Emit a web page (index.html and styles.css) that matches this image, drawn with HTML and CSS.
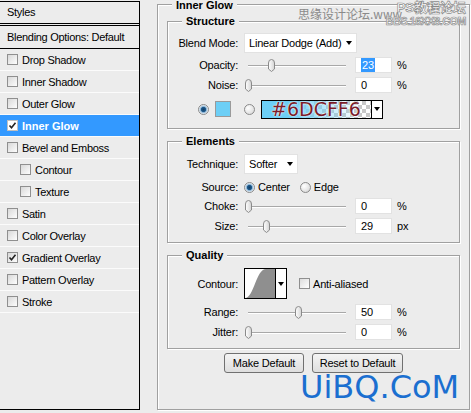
FILE: index.html
```html
<!DOCTYPE html>
<html lang="en">

<head>
  <meta charset="UTF-8">
  <meta name="viewport" content="width=device-width, initial-scale=1.0">
  <title>Layer Style - Inner Glow</title>
  <link rel="stylesheet" href="styles.css">
</head>

<body>
  <svg class="defs" width="0" height="0">
    <defs>
      <linearGradient id="thumb-fill" x1="0" y1="0" x2="1" y2="0">
        <stop offset="0" stop-color="#ffffff" />
        <stop offset="1" stop-color="#d4d4d4" />
      </linearGradient>
      <symbol id="thumb" viewBox="0 0 9 13">
        <path d="M1.5 4 Q1.5 0.5 4.5 0.5 Q7.5 0.5 7.5 4 V10 L4.5 12.5 L1.5 10 Z" fill="url(#thumb-fill)" stroke="#8a8a8a" />
      </symbol>
      <symbol id="tick" viewBox="0 0 9 9">
        <path d="M1.5 4.5 L3.5 6.8 L7.5 1.8" fill="none" stroke="#222" stroke-width="1.6" />
      </symbol>
    </defs>
  </svg>

  <div class="dialog">
    <ul class="styles-list">
      <li class="styles-head">Styles</li>
      <li class="blend-head">Blending Options: Default</li>
      <li class="style-row"><span class="check"></span>Drop Shadow</li>
      <li class="style-row"><span class="check"></span>Inner Shadow</li>
      <li class="style-row"><span class="check"></span>Outer Glow</li>
      <li class="style-row is-active"><span class="check"><svg><use href="#tick" /></svg></span>Inner Glow</li>
      <li class="style-row"><span class="check"></span>Bevel and Emboss</li>
      <li class="style-row sub"><span class="check"></span>Contour</li>
      <li class="style-row sub"><span class="check"></span>Texture</li>
      <li class="style-row"><span class="check"></span>Satin</li>
      <li class="style-row"><span class="check"></span>Color Overlay</li>
      <li class="style-row"><span class="check"><svg><use href="#tick" /></svg></span>Gradient Overlay</li>
      <li class="style-row"><span class="check"></span>Pattern Overlay</li>
      <li class="style-row"><span class="check"></span>Stroke</li>
    </ul>

    <div class="group outer">
      <span class="group-title">Inner Glow</span>

      <div class="group structure">
        <span class="group-title">Structure</span>
        <div class="row row-select">
          <span class="lbl">Blend Mode:</span>
          <div class="select select-blend">Linear Dodge (Add)<span class="arrow"></span></div>
        </div>
        <div class="row">
          <span class="lbl">Opacity:</span>
          <div class="slider"><svg class="thumb" style="left: 23px"><use href="#thumb" /></svg></div>
          <div class="num"><span class="picked">23</span></div>
          <span class="unit">%</span>
        </div>
        <div class="row">
          <span class="lbl">Noise:</span>
          <div class="slider"><svg class="thumb" style="left: 0px"><use href="#thumb" /></svg></div>
          <div class="num">0</div>
          <span class="unit">%</span>
        </div>
        <div class="row row-color">
          <span class="radio on"></span>
          <span class="swatch"></span>
          <span class="radio"></span>
          <div class="grad">
            <div class="grad-fill"><span class="grad-hex">#6DCFF6</span></div>
            <div class="grad-arrow"><span class="arrow"></span></div>
          </div>
        </div>
      </div>

      <div class="group elements">
        <span class="group-title">Elements</span>
        <div class="row row-select">
          <span class="lbl">Technique:</span>
          <div class="select select-tech">Softer<span class="arrow"></span></div>
        </div>
        <div class="row row-source">
          <span class="lbl">Source:</span>
          <span class="radio on"></span>
          <span class="opt">Center</span>
          <span class="radio"></span>
          <span class="opt">Edge</span>
        </div>
        <div class="row row-choke">
          <span class="lbl">Choke:</span>
          <div class="slider"><svg class="thumb" style="left: 0px"><use href="#thumb" /></svg></div>
          <div class="num">0</div>
          <span class="unit">%</span>
        </div>
        <div class="row">
          <span class="lbl">Size:</span>
          <div class="slider"><svg class="thumb" style="left: 18px"><use href="#thumb" /></svg></div>
          <div class="num">29</div>
          <span class="unit">px</span>
        </div>
      </div>

      <div class="group quality">
        <span class="group-title">Quality</span>
        <div class="row row-contour">
          <span class="lbl">Contour:</span>
          <div class="contour">
            <svg class="curve" width="30" height="29" viewBox="0 0 30 29">
              <path d="M0 29 C9 29 11 0 21 0 L30 0 L30 29 Z" fill="#8f8f8f" />
            </svg>
            <div class="contour-arrow"><span class="arrow"></span></div>
          </div>
          <span class="check"></span>
          <span class="opt">Anti-aliased</span>
        </div>
        <div class="row row-range">
          <span class="lbl">Range:</span>
          <div class="slider"><svg class="thumb" style="left: 50px"><use href="#thumb" /></svg></div>
          <div class="num">50</div>
          <span class="unit">%</span>
        </div>
        <div class="row">
          <span class="lbl">Jitter:</span>
          <div class="slider"><svg class="thumb" style="left: 0px"><use href="#thumb" /></svg></div>
          <div class="num">0</div>
          <span class="unit">%</span>
        </div>
      </div>

      <div class="buttons">
        <button class="btn btn-make">Make Default</button>
        <button class="btn btn-reset">Reset to Default</button>
      </div>
    </div>

    <!-- watermarks sitting over the screenshot -->
    <span class="mark-top">思缘设计论坛.www.</span>
    <span class="mark-ps"><span class="mark-ps-cn">PS教程论坛</span><span class="mark-ps-en">BBS.16XX8.COM</span></span>
    <span class="mark-uibq">UiBQ.CoM</span>
  </div>
</body>

</html>
```

FILE: styles.css
```css
html {
  box-sizing: border-box;
  font-family: "Liberation Sans", Arial, sans-serif;
  font-size: 11px;
}

*,
*:before,
*:after {
  box-sizing: inherit;
}

body {
  margin: 0;
  width: 471px;
  height: 413px;
  overflow: hidden;
  background: #ececec;
  color: #000;
}

.defs {
  position: absolute;
}

.dialog {
  position: relative;
  display: flex;
  align-items: flex-start;
  height: 413px;
}

/* left list of styles */
.styles-list {
  list-style: none;
  margin: 1px 0 0 -1px;
  padding: 0;
  width: 141px;
  height: 409px;
  border: 1px solid #000;
  background: #ececec;
  letter-spacing: -0.3px;
}

.styles-head {
  height: 24px;
  line-height: 21px;
  padding-left: 7px;
  border-bottom: 3px double #000;
}

.blend-head {
  height: 23px;
  line-height: 22px;
  padding-left: 7px;
  border-bottom: 1px solid #000;
}

.style-row {
  display: flex;
  align-items: center;
  gap: 4px;
  height: 22px;
  padding-left: 7px;
  border-bottom: 1px solid #fbfbfb;
}

.style-row.sub {
  padding-left: 20px;
}

.style-row.is-active {
  background: #3399ff;
  color: #fff;
  font-weight: bold;
  letter-spacing: 0;
}

.check {
  display: inline-flex;
  align-items: center;
  justify-content: center;
  width: 11px;
  height: 11px;
  flex-shrink: 0;
  border: 1px solid #8f8f8f;
  background: linear-gradient(135deg, #d8d8d8, #fdfdfd);
}

.check svg {
  width: 9px;
  height: 9px;
}

.is-active .check {
  background: #fff;
  border-color: #c0c0c0;
}

/* group boxes */
.group {
  position: relative;
  border: 1px solid #a0a0a0;
  box-shadow: inset 1px 1px 0 #fff, 1px 1px 0 #fff;
}

.group-title {
  position: absolute;
  top: -7px;
  left: 14px;
  padding: 0 4px;
  line-height: 13px;
  background: #ececec;
  font-weight: bold;
  letter-spacing: 0;
}

.outer {
  margin: 4px 0 0 17px;
  width: 313px;
  height: 406px;
  padding: 16px 9px 0;
  letter-spacing: -0.2px;
}

.outer > .group-title {
  top: -6px;
}

.structure {
  padding-bottom: 10px;
}

.elements {
  margin-top: 12px;
  padding-bottom: 8px;
}

.quality {
  margin-top: 12px;
  padding-bottom: 8px;
}

/* rows */
.row {
  display: flex;
  align-items: center;
  height: 16px;
  margin-top: 4px;
}

.row-select {
  height: 20px;
  margin-top: 11px;
}

.elements .row-select {
  margin-top: 12px;
}

.row-color {
  height: 18px;
  margin-top: 7px;
  padding-left: 30px;
}

.row-source {
  margin-top: 5px;
}

.row-choke {
  margin-top: 3px;
}

.row-contour {
  height: 31px;
  margin-top: 12px;
}

.row-range {
  margin-top: 5px;
}

.lbl {
  width: 70px;
  flex-shrink: 0;
  margin-right: 6px;
  text-align: right;
}

.select {
  display: flex;
  align-items: center;
  justify-content: space-between;
  height: 20px;
  padding: 0 4px;
  background: #fff;
  border: 1px solid #e2e2e2;
}

.select-blend {
  width: 113px;
}

.select-tech {
  width: 54px;
}

.arrow {
  width: 0;
  height: 0;
  border-left: 3.5px solid transparent;
  border-right: 3.5px solid transparent;
  border-top: 4px solid #000;
}

.slider {
  position: relative;
  width: 106px;
  height: 16px;
  margin-right: 5px;
}

.slider:before {
  content: "";
  position: absolute;
  left: 4px;
  right: 4px;
  top: 8px;
  height: 2px;
  border-top: 1px solid #a8a8a8;
  border-bottom: 1px solid #fff;
}

.thumb {
  position: absolute;
  top: 2px;
  width: 9px;
  height: 13px;
}

.num {
  width: 37px;
  height: 16px;
  padding-left: 5px;
  line-height: 14px;
  background: #fff;
  border: 1px solid #e2e2e2;
}

.picked {
  display: inline-block;
  padding: 0 1px;
  background: #3399ff;
  color: #fff;
}

.unit {
  margin-left: 5px;
}

.radio {
  width: 11px;
  height: 11px;
  flex-shrink: 0;
  border-radius: 50%;
  border: 1px solid #8a8a8a;
  background: radial-gradient(circle at 35% 35%, #fff, #d2d2d2);
}

.radio.on {
  background: radial-gradient(circle, #143e66 0, #1e5a8c 2.2px, #8fb6d6 3px, #eef3f7 4.5px);
}

.swatch {
  width: 16px;
  height: 16px;
  margin: 0 13px 0 6px;
  background: #6dcff6;
  border: 1px solid #9a9a9a;
}

.grad {
  display: flex;
  width: 122px;
  height: 19px;
  margin-left: 6px;
  border: 1px solid #000;
}

.grad-fill {
  position: relative;
  flex: 1;
  background: linear-gradient(to right, #6dcff6 25%, rgba(109, 207, 246, 0) 90%),
    repeating-conic-gradient(#c8c8c8 0 25%, #fff 0 50%) 0 0 / 8px 8px;
}

.grad-hex {
  position: absolute;
  left: 9px;
  top: -2px;
  font-family: "DejaVu Sans", sans-serif;
  font-size: 19px;
  line-height: 20px;
  letter-spacing: 0;
  color: #7b1d2b;
  text-shadow: 0 0 1px #fff, 0 0 2px #fff;
}

.grad-arrow {
  display: flex;
  align-items: center;
  justify-content: center;
  width: 11px;
  background: #fff;
  border-left: 1px solid #000;
}

.opt {
  margin: 0 10px 0 3px;
}

.contour {
  display: flex;
  width: 43px;
  height: 31px;
  margin-right: 12px;
  background: #fff;
  border: 1px solid #000;
}

.curve {
  display: block;
}

.contour-arrow {
  display: flex;
  align-items: center;
  justify-content: center;
  flex: 1;
  border-left: 1px solid #000;
}

.row-contour .check {
  background: linear-gradient(135deg, #dcdcdc, #fff);
}

/* buttons */
.buttons {
  display: flex;
  justify-content: center;
  gap: 8px;
  margin-top: 4px;
}

.btn {
  height: 20px;
  padding: 0;
  font-family: inherit;
  font-size: 11px;
  letter-spacing: -0.2px;
  color: #000;
  border: 1px solid #707070;
  border-radius: 3px;
  background: linear-gradient(#f4f4f4, #dedede);
}

.btn-make {
  width: 80px;
}

.btn-reset {
  width: 91px;
}

/* watermarks */
.mark-top {
  position: absolute;
  left: 298px;
  top: 7px;
  font-family: "Noto Sans CJK SC", sans-serif;
  font-size: 12px;
  line-height: 14px;
  color: #8a8a8a;
  white-space: nowrap;
}

.mark-ps {
  position: absolute;
  right: 5px;
  top: 1px;
  display: flex;
  flex-direction: column;
  align-items: flex-end;
  color: #fff;
  -webkit-text-stroke: 0.7px #8a8a8a;
  white-space: nowrap;
}

.mark-ps-cn {
  font-family: "Liberation Sans", "Noto Sans CJK SC", sans-serif;
  font-size: 13px;
  line-height: 14px;
  font-weight: bold;
}

.mark-ps-en {
  font-family: "Liberation Sans", sans-serif;
  font-size: 10.5px;
  line-height: 12px;
  font-weight: bold;
  letter-spacing: -0.3px;
}

.mark-uibq {
  position: absolute;
  left: 300px;
  top: 371px;
  font-family: "DejaVu Sans", sans-serif;
  font-size: 32px;
  line-height: 32px;
  color: #1b6fd0;
}
```
